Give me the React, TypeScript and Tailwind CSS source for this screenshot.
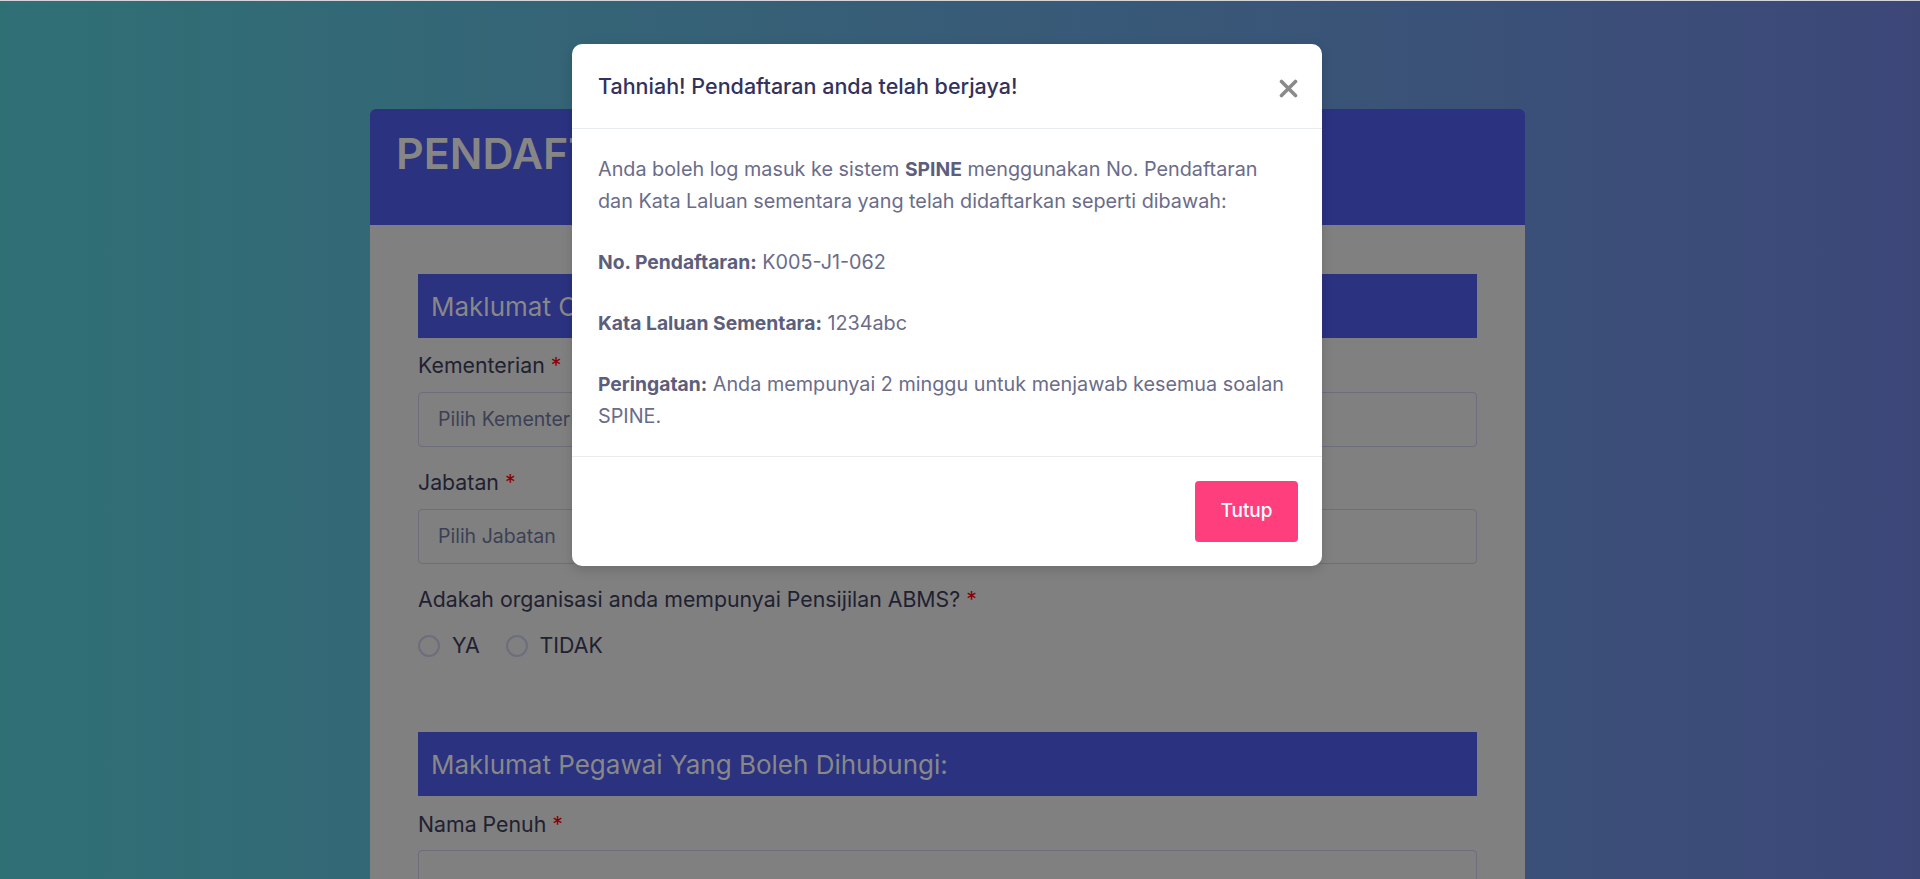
const Field = ({ label, placeholder, className }: { label: string; placeholder?: string; className: string }) => (
  <div className={className}>
    <label className="block text-[21.3px] leading-[30px] text-[#1f2130]">
      {label} <span className="text-[#8a0000]">*</span>
    </label>
    <div className="mt-3 flex h-[55px] items-center rounded-[4px] border border-[#6c6e7b] px-[19px] text-[19.5px] text-[#3c4055]">
      {placeholder}
    </div>
  </div>
);

const Radio = ({ label }: { label: string }) => (
  <div className="flex items-center gap-3">
    <span className="h-[22px] w-[22px] rounded-full border-2 border-[#6c6e7b]" />
    <span className="text-[21.3px] text-[#1f2130]">{label}</span>
  </div>
);

const B = ({ children }: { children: React.ReactNode }) => (
  <b className="text-[19.3px] font-bold leading-[20px] text-[#5c5e7c]">{children}</b>
);

export default function App() {
  return (
    <div className="relative h-[879px] w-full overflow-hidden bg-linear-to-r from-[#2f7075] to-[#3c4778] font-['Inter',sans-serif]">
      <div className="h-px bg-[#d3d5da]" />

      {/* form card behind the backdrop */}
      <div className="ml-[370px] mt-[108px] w-[1155px] overflow-hidden rounded-t-[6px]">
        <div className="h-[116px] bg-[#2b3280] pl-[26px] pt-[16px]">
          <h1 className="text-[43px] font-semibold leading-[56px] text-[#868686]">PENDAFTARAN ORGANISASI</h1>
        </div>
        <div className="bg-[#808080] px-12 pb-20 pt-[49px]">
          <div className="flex h-16 items-center bg-[#2b3280] pl-[13px] text-[26px] text-[#888888]">
            Maklumat Organisasi:
          </div>
          <Field className="mt-3" label="Kementerian" placeholder="Pilih Kementerian" />
          <Field className="mt-5" label="Jabatan" placeholder="Pilih Jabatan" />
          <div className="mt-5">
            <label className="block text-[21.3px] leading-[30px] text-[#1f2130]">
              Adakah organisasi anda mempunyai Pensijilan ABMS? <span className="text-[#8a0000]">*</span>
            </label>
            <div className="mt-[17px] flex h-[30px] items-center gap-[26px]">
              <Radio label="YA" />
              <Radio label="TIDAK" />
            </div>
          </div>

          <div className="mt-[71px] flex h-16 items-center bg-[#2b3280] pl-[13px] text-[26px] text-[#888888]">
            Maklumat Pegawai Yang Boleh Dihubungi:
          </div>
          <div className="mt-[13px]">
            <label className="block text-[21.3px] leading-[30px] text-[#1f2130]">
              Nama Penuh <span className="text-[#8a0000]">*</span>
            </label>
            <div className="mt-[11px] h-[55px] rounded-[4px] border border-[#6c6e7b]" />
          </div>
        </div>
      </div>

      {/* success modal */}
      <div className="absolute left-[572px] top-[44px] w-[750px] overflow-hidden rounded-[10px] bg-white shadow-[0_4px_12px_rgba(0,0,0,0.15)]">
        <div className="flex h-[85px] items-center justify-between border-b border-[#e9ecef] pl-[26px] pr-6">
          <h5 className="text-[21.5px] font-medium text-[#32325d]">Tahniah! Pendaftaran anda telah berjaya!</h5>
          <svg width="19" height="19" viewBox="0 0 19 19" className="mt-1">
            <path d="M2.5 2.5 L16.5 16.5 M16.5 2.5 L2.5 16.5" stroke="#8a8a8a" strokeWidth="3.6" strokeLinecap="round" />
          </svg>
        </div>
        <div className="px-[26px] py-6 text-[19.8px] leading-[32px] text-[#6a6c89]">
          <p className="mb-[29px]">
            Anda boleh log masuk ke sistem <B>SPINE</B> menggunakan No. Pendaftaran
            <br />
            dan Kata Laluan sementara yang telah didaftarkan seperti dibawah:
          </p>
          <p className="mb-[29px]">
            <B>No. Pendaftaran:</B> K005-J1-062
          </p>
          <p className="mb-[29px]">
            <B>Kata Laluan Sementara:</B> 1234abc
          </p>
          <p>
            <B>Peringatan:</B> Anda mempunyai 2 minggu untuk menjawab kesemua soalan
            <br />
            SPINE.
          </p>
        </div>
        <div className="flex justify-end border-t border-[#e9ecef] p-6">
          <button className="h-[61px] w-[103px] rounded-[4px] bg-[#ff3e7d] text-[19px] font-medium text-white">
            Tutup
          </button>
        </div>
      </div>
    </div>
  );
}
